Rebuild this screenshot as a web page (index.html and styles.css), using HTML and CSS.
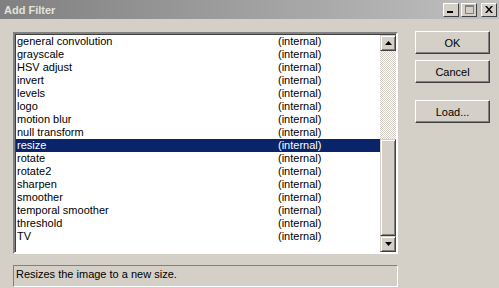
FILE: index.html
```html
<!DOCTYPE html>
<html lang="en">
<head>
    <meta charset="UTF-8">
    <title>Add Filter</title>
    <link rel="stylesheet" href="styles.css">
</head>
<body>
    <div class="titlebar">
        <span class="title">Add Filter</span>
        <div class="caption-buttons">
            <span class="cap-btn"><svg width="8" height="7" viewBox="0 0 8 7"><rect x="0" y="5" width="6" height="2" fill="#000"/></svg></span>
            <span class="cap-btn"><svg width="9" height="9" viewBox="0 0 9 9"><rect x="0.5" y="0.5" width="8" height="8" fill="none" stroke="#808080"/><rect x="0" y="0" width="9" height="2" fill="#808080"/></svg></span>
            <span class="cap-btn close"><svg width="8" height="7" viewBox="0 0 8 7"><path d="M0 0h2l2 2.5 2-2.5h2l-3 3.5 3 3.5h-2l-2-2.5-2 2.5h-2l3-3.5z" fill="#000"/></svg></span>
        </div>
    </div>
    <div class="dialog">
        <div class="left">
            <div class="listbox">
                <ul class="rows">
                    <li><span class="name">general convolution</span><span class="kind">(internal)</span></li>
                    <li><span class="name">grayscale</span><span class="kind">(internal)</span></li>
                    <li><span class="name">HSV adjust</span><span class="kind">(internal)</span></li>
                    <li><span class="name">invert</span><span class="kind">(internal)</span></li>
                    <li><span class="name">levels</span><span class="kind">(internal)</span></li>
                    <li><span class="name">logo</span><span class="kind">(internal)</span></li>
                    <li><span class="name">motion blur</span><span class="kind">(internal)</span></li>
                    <li><span class="name">null transform</span><span class="kind">(internal)</span></li>
                    <li class="selected"><span class="name">resize</span><span class="kind">(internal)</span></li>
                    <li><span class="name">rotate</span><span class="kind">(internal)</span></li>
                    <li><span class="name">rotate2</span><span class="kind">(internal)</span></li>
                    <li><span class="name">sharpen</span><span class="kind">(internal)</span></li>
                    <li><span class="name">smoother</span><span class="kind">(internal)</span></li>
                    <li><span class="name">temporal smoother</span><span class="kind">(internal)</span></li>
                    <li><span class="name">threshold</span><span class="kind">(internal)</span></li>
                    <li><span class="name">TV</span><span class="kind">(internal)</span></li>
                </ul>
                <div class="scrollbar">
                    <div class="arrow"><svg width="7" height="4" viewBox="0 0 7 4"><path d="M3.5 0L7 4H0z" fill="#000"/></svg></div>
                    <div class="track"></div>
                    <div class="thumb"></div>
                    <div class="arrow"><svg width="7" height="4" viewBox="0 0 7 4"><path d="M0 0H7L3.5 4z" fill="#000"/></svg></div>
                </div>
            </div>
            <div class="status">Resizes the image to a new size.</div>
        </div>
        <div class="buttons">
            <button>OK</button>
            <button>Cancel</button>
            <button class="load">Load...</button>
        </div>
    </div>
</body>
</html>
```

FILE: styles.css
```css
body {
    margin: 0;
    background: #d4d0c8;
    font-family: "Liberation Sans", Arial, sans-serif;
    font-size: 11px;
    color: #000;
    overflow: hidden;
}
.titlebar {
    height: 19px;
    display: flex;
    align-items: center;
    justify-content: space-between;
    background: linear-gradient(to right, #808080, #c0c0c0);
    padding: 0 2px 0 4px;
}
.title {
    color: #e4e2dc;
    font-weight: bold;
    font-size: 11px;
}
.caption-buttons {
    display: flex;
    gap: 2px;
}
.cap-btn {
    width: 14px;
    height: 12px;
    background: #d4d0c8;
    border: 1px solid;
    border-color: #fff #404040 #404040 #fff;
    display: flex;
    align-items: center;
    justify-content: center;
}
.cap-btn.close {
    margin-left: 2px;
}
.dialog {
    display: flex;
    padding: 13px 9px 0 13px;
}
.left {
    width: 386px;
}
.listbox {
    height: 218px;
    display: flex;
    background: #fff;
    border: 2px solid;
    border-color: #808080 #fff #fff #808080;
    box-shadow: inset 1px 1px 0 #404040;
}
.rows {
    list-style: none;
    margin: 0;
    padding: 1px 0 0 1px;
    flex: 1;
}
.rows li {
    height: 13px;
    line-height: 13px;
    display: flex;
    padding-left: 1px;
}
.rows li.selected {
    background: #0a246a;
    color: #fff;
}
.name {
    width: 261px;
}
.scrollbar {
    width: 16px;
    display: flex;
    flex-direction: column;
    margin-top: 1px;
}
.arrow {
    height: 14px;
    background: #d4d0c8;
    border: 1px solid;
    border-color: #d4d0c8 #404040 #404040 #d4d0c8;
    box-shadow: inset 1px 1px 0 #fff, inset -1px -1px 0 #808080;
    display: flex;
    align-items: center;
    justify-content: center;
}
.track {
    height: 88px;
    background-color: #fff;
    background-image: repeating-conic-gradient(#d4d0c8 0 25%, #fff 0 50%);
    background-size: 2px 2px;
}
.thumb {
    flex: 1;
    background: #d4d0c8;
    border: 1px solid;
    border-color: #d4d0c8 #404040 #404040 #d4d0c8;
    box-shadow: inset 1px 1px 0 #fff, inset -1px -1px 0 #808080;
}
.status {
    margin-top: 11px;
    height: 22px;
    line-height: 14px;
    padding: 1px 2px;
    border: 1px solid;
    border-color: #808080 #fff #fff #808080;
    box-sizing: border-box;
}
.buttons {
    display: flex;
    flex-direction: column;
    margin: -1px 0 0 17px;
    gap: 6px;
}
button {
    width: 75px;
    height: 23px;
    background: #d4d0c8;
    font-family: "Liberation Sans", Arial, sans-serif;
    font-size: 11px;
    color: #000;
    border: 1px solid;
    border-color: #fff #404040 #404040 #fff;
    box-shadow: inset -1px -1px 0 #808080;
    padding: 0;
}
.load {
    margin-top: 11px;
}
```
